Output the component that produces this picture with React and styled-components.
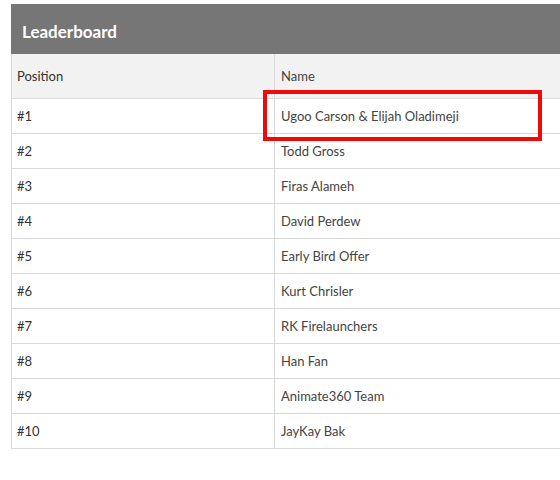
import React from 'react';
import styled, { createGlobalStyle } from 'styled-components';

const GlobalStyle = createGlobalStyle`
  body {
    margin: 0;
    background: #fff;
    font-family: Lato, "Open Sans", sans-serif;
  }
`;

const Page = styled.div`
  box-sizing: border-box;
  width: 560px;
  padding: 4px 0 0 11px;
  overflow: hidden;
`;

const Panel = styled.section`
  width: 580px;
`;

const Title = styled.h2`
  margin: 0;
  box-sizing: border-box;
  height: 50px;
  display: flex;
  align-items: center;
  padding: 4px 0 0 11px;
  background: #767676;
  color: #fff;
  font-size: 17px;
  font-weight: 700;
`;

const Table = styled.table`
  width: 100%;
  border-collapse: collapse;
  font-size: 13px;
  color: #333;
`;

const Cell = styled.td`
  position: relative;
  height: 34px;
  padding: 0 5px;
  border: 1px solid #d9d9d9;
  width: ${(p) => (p.$first ? '252px' : 'auto')};
  color: ${(p) => (p.$name ? '#444' : '#333')};
  ${(p) => p.$name && 'padding-left: 6px;'}
`;

const HeadCell = styled(Cell).attrs({ as: 'th' })`
  height: 44px;
  background: #f2f2f2;
  text-align: left;
  font-weight: 400;
  border-top: none;
`;

const Highlight = styled.span`
  position: absolute;
  left: -12px;
  top: -9px;
  width: 279px;
  height: 51px;
  box-sizing: border-box;
  border: 4px solid #ee0a0a;
  pointer-events: none;
`;

const rows = [
  'Ugoo Carson & Elijah Oladimeji',
  'Todd Gross',
  'Firas Alameh',
  'David Perdew',
  'Early Bird Offer',
  'Kurt Chrisler',
  'RK Firelaunchers',
  'Han Fan',
  'Animate360 Team',
  'JayKay Bak',
];

export default function App() {
  return (
    <Page>
      <GlobalStyle />
      <Panel>
        <Title>Leaderboard</Title>
        <Table>
          <thead>
            <tr>
              <HeadCell $first>Position</HeadCell>
              <HeadCell $name>Name</HeadCell>
            </tr>
          </thead>
          <tbody>
            {rows.map((name, i) => (
              <tr key={name}>
                <Cell $first>#{i + 1}</Cell>
                <Cell $name>
                  {i === 0 && <Highlight />}
                  {name}
                </Cell>
              </tr>
            ))}
          </tbody>
        </Table>
      </Panel>
    </Page>
  );
}
